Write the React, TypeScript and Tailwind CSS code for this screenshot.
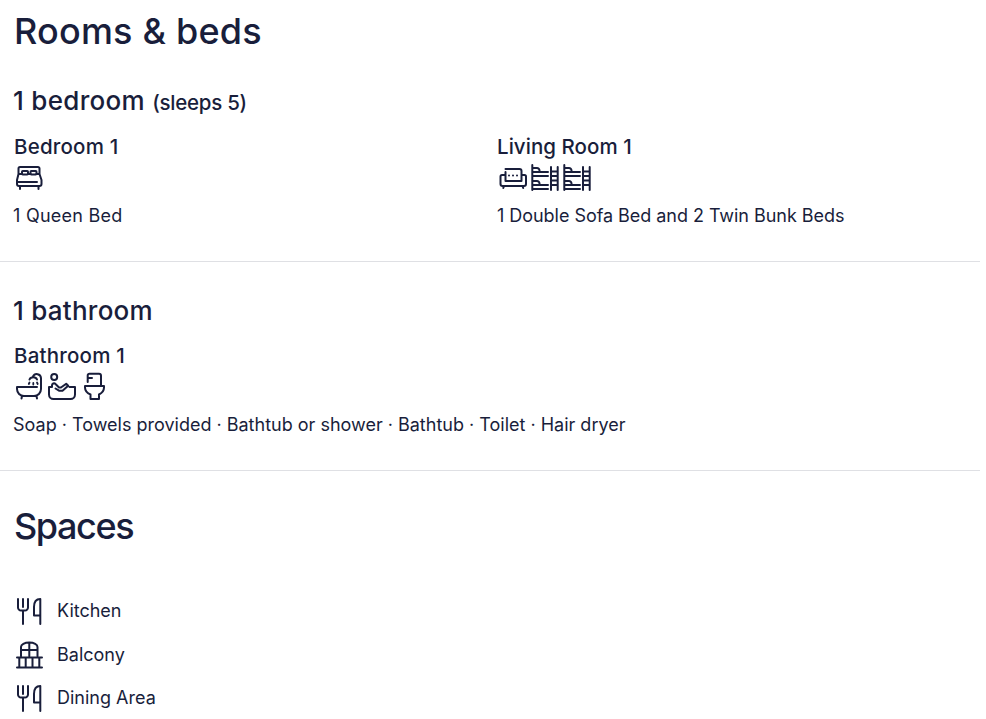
import type { ReactNode } from 'react'

function Glyph({ children }: { children: ReactNode }) {
  return (
    <svg
      aria-hidden="true"
      className="h-8 w-8 shrink-0"
      fill="none"
      stroke="currentColor"
      strokeLinecap="round"
      strokeLinejoin="round"
      strokeWidth="2"
      viewBox="0 0 32 32"
    >
      {children}
    </svg>
  )
}

const BedIcon = () => (
  <Glyph>
    <path d="M5.500 12V6.500a1.500 1.500 0 0 1 1.500-1.500h18a1.500 1.500 0 0 1 1.500 1.500V12M5.500 12 4 18v4a2 2 0 0 0 2 2h20.500a2 2 0 0 0 2-2v-4L26.500 12M4 20h20M7 24v3M25.500 24v3M5.500 12H9M15 12h2.500M23.500 12h3" />
    <rect x="9" y="9" width="6" height="3.500" rx=".8" />
    <rect x="17.500" y="9" width="6" height="3.500" rx=".8" />
  </Glyph>
)

const SofaIcon = () => (
  <Glyph>
    <path d="M8.500 7h14a2 2 0 0 1 2 2v10h-16v-9M8.500 13H5a1.500 1.500 0 0 0-1.500 1.500V22a2 2 0 0 0 2 2h21.500a2 2 0 0 0 2-2v-7.500a1.500 1.500 0 0 0-1.500-1.500h-3M7 24l-.7 2M25.500 24l.7 2" />
    <path d="M12 13.500h.01M16 13.500h.01M20 13.500h.01" />
  </Glyph>
)

const BunkIcon = () => (
  <Glyph>
    <path d="M3.300 3v25M3.300 6H8a2.500 2.500 0 0 1 2.500 2.500v1M3.300 10H19M3.300 14H19M3.300 19H8a2.500 2.500 0 0 1 2.500 2.500V23M3.300 23H19M3.300 27H19" />
    <path d="M22 5v23M28.700 5v23M22 9.500h6.500M22 14h6.500M22 18.500h6.500M22 23h6.500" />
  </Glyph>
)

const ShowerBathIcon = () => (
  <Glyph>
    <path d="M24 16H4v2a7 7 0 0 0 7 7h10a7 7 0 0 0 7-7V7a4.200 4.200 0 0 0-8-1.500M16.500 8.500c1.200-3 6.300-3 7.500 0M9 25l-.5 2.500M23.500 25l.5 2.500" />
    <path d="M16.500 11.500l-.7 1.500M20.300 12v1.500M24 11.500l.7 1.500" strokeWidth="1.800" />
  </Glyph>
)

const BathtubIcon = () => (
  <Glyph>
    <circle cx="9.200" cy="6" r="3" />
    <path d="M7 16v-1.500a2 2 0 0 1 3.500-1.500l3.500 3.500h2l5.200-3.800 2 2-5.700 5h-3.500L10.500 17.500M7 16H4v7.500A4.500 4.500 0 0 0 8.500 28h17a4.500 4.500 0 0 0 4.500-4.500V16h-5.500" />
  </Glyph>
)

const ToiletIcon = () => (
  <Glyph>
    <path d="M10.700 11V4.500a1.700 1.700 0 0 1 1.700-1.700H22a2 2 0 0 1 2 2V15M11 7h4M8 15h19v1.500c0 3-2 5.500-5 7V28h-8.500v-4.500c-3.500-1.500-5.500-4-5.500-7z" />
  </Glyph>
)

const CutleryIcon = () => (
  <Glyph>
    <path d="M5 4v8.500a3 3 0 0 0 3 3h4a3 3 0 0 0 3-3V4M10 4v8M10 15.500V29M27.300 29V4c-4 0-6.300 3-6.300 8v8.500h6" />
  </Glyph>
)

const BalconyIcon = () => (
  <Glyph>
    <path d="M8 17V8c0-2.500 3.500-4.500 8.300-4.500S24.500 5.500 24.500 8v9M16.300 4v13M8 11h16.500M4 18.500h25M4 28.500h25M6.300 19v9M12.700 19v9M19.500 19v9M26.300 19v9" />
  </Glyph>
)

function Room({ name, icons, text }: { name: ReactNode; icons: ReactNode; text: ReactNode }) {
  return (
    <div>
      <h4 className="pl-px text-[20.500px] leading-6 font-medium tracking-[0.200px]">{name}</h4>
      <div className="mt-[3px] flex">{icons}</div>
      <p className="mt-2.5 text-[18px] leading-6 whitespace-nowrap">{text}</p>
    </div>
  )
}

const spaces = [
  { name: 'Kitchen', icon: <CutleryIcon /> },
  { name: 'Balcony', icon: <BalconyIcon /> },
  { name: 'Dining Area', icon: <CutleryIcon /> },
]

export default function App() {
  return (
    <main className="h-[719px] w-[980px] overflow-hidden bg-white font-['Inter','Liberation_Sans',sans-serif] text-[#191e3b]">
      <section className="border-b border-[#dfe0e4] px-[13px] pt-[9px] pb-[33px]">
        <h2 className="pl-px text-[36px] leading-[44px] font-medium tracking-[0.200px]">Rooms &amp; beds</h2>
        <h3 className="mt-8 text-[26px] leading-8 font-medium tracking-[0.300px]">
          1 bedroom <span className="text-[20.500px] leading-none tracking-[-0.250px]">(sleeps 5)</span>
        </h3>
        <div className="mt-[18px] grid grid-cols-[484px_1fr]">
          <Room name="Bedroom 1" icons={<BedIcon />} text={<span className="tracking-[0.250px]">1 Queen Bed</span>} />
          <Room
            name={<span className="-ml-px tracking-[0.050px]">Living Room 1</span>}
            icons={
              <>
                <SofaIcon />
                <BunkIcon />
                <BunkIcon />
              </>
            }
            text={<span className="tracking-[-0.040px]">1 Double Sofa Bed and 2 Twin Bunk Beds</span>}
          />
        </div>
      </section>

      <section className="border-b border-[#dfe0e4] px-[13px] pt-[33px] pb-[33px]">
        <h3 className="mb-[17px] text-[26px] leading-8 font-medium tracking-[0.250px]">1 bathroom</h3>
        <Room
          name="Bathroom 1"
          icons={
            <>
              <ShowerBathIcon />
              <BathtubIcon />
              <ToiletIcon />
            </>
          }
          text="Soap · Towels provided · Bathtub or shower · Bathtub · Toilet · Hair dryer"
        />
      </section>

      <section className="px-[13px] pt-[33px]">
        <h2 className="pl-px text-[36px] leading-[44px] font-medium tracking-[-1.400px]">Spaces</h2>
        <ul className="mt-[47px] flex flex-col gap-[11.500px]">
          {spaces.map((space) => (
            <li key={space.name} className="flex items-center gap-3 text-[18px] leading-6">
              {space.icon}
              {space.name}
            </li>
          ))}
        </ul>
      </section>
    </main>
  )
}
